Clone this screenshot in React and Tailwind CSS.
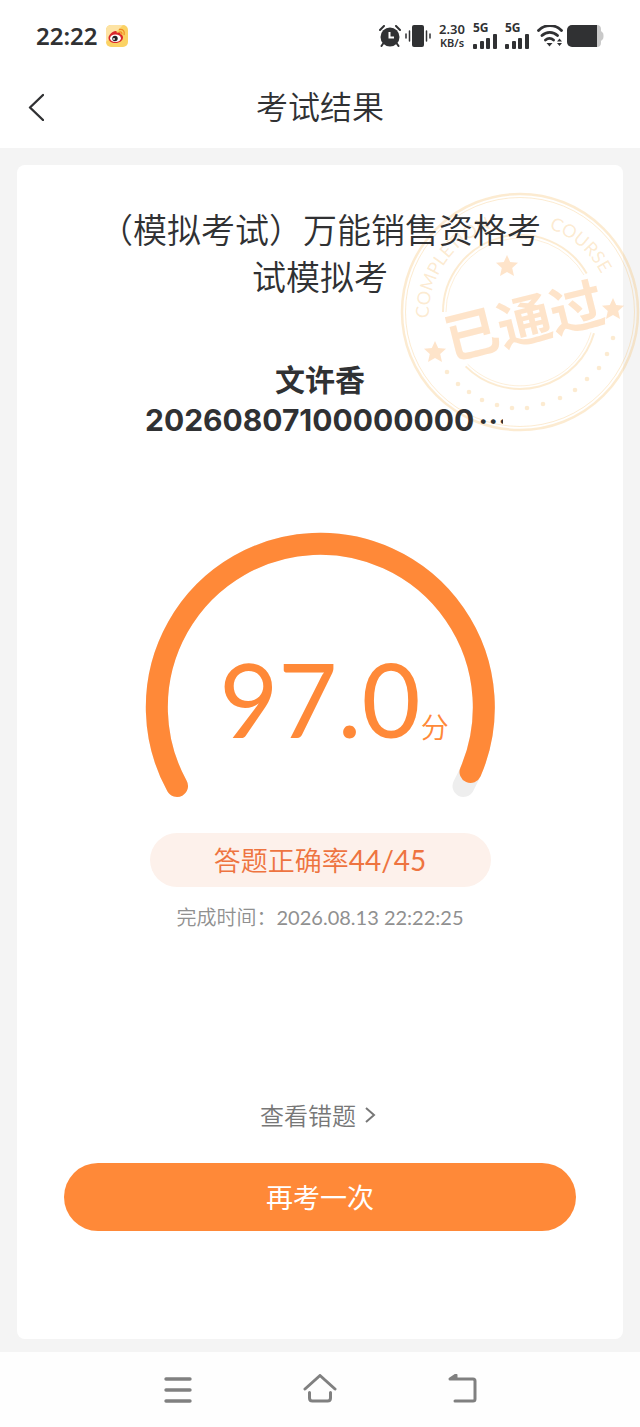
import React from 'react';

const result = {
  title: '（模拟考试）万能销售资格考试模拟考',
  name: '文许香',
  number: '20260807100000000',
  score: '97.0',
  correct: 44,
  total: 45,
  finishedAt: '2026.08.13 22:22:25',
};

const STAR = 'M0-11 3.2-4 11-3.2 5.2 2 7 10 0 6-7 10-5.2 2-11-3.2-3.2-4Z';

// small marks along the lower edge of the stamp
const stampDots = [
  [47, 180], [58, 192], [69, 200], [82, 208], [97, 213], [112, 216], [127, 216],
  [143, 212], [160, 206], [175, 198], [187, 187], [199, 176], [207, 162], [213, 146],
];

const Signal = () => (
  <div className="flex flex-col items-start">
    <span className="text-[12px] leading-[10px] font-bold">5G</span>
    <svg className="h-4 w-6" viewBox="0 0 24 16" fill="currentColor" aria-hidden="true">
      <rect x="0" y="11" width="4" height="5" rx="1" />
      <rect x="7" y="8" width="4" height="8" rx="1" />
      <rect x="13" y="5" width="4" height="11" rx="1" />
      <rect x="20" y="1" width="4" height="15" rx="1" />
    </svg>
  </div>
);

const StatusBar = () => (
  <div className="flex h-[72px] items-center justify-between pr-9 pl-9">
    <div className="flex items-center gap-2">
      <span className="font-['Noto_Sans','Noto_Sans_CJK_SC',sans-serif] text-[24px] leading-8 font-semibold">22:22</span>
      <svg className="size-[22px]" viewBox="0 0 22 22" aria-hidden="true">
        <rect width="22" height="22" rx="5" fill="#fbd264" />
        <path d="M0 5a5 5 0 0 1 5-5h12L0 17Z" fill="#fde3a4" />
        <path d="M2.5 13c0-3 4-7 7-7 1.500 0 1.500 1 1.200 2 2-.8 4-.7 3.800 1.300 1.800.4 2.500 1.800 2.500 3.200 0 3-3.500 5.500-7.500 5.500s-7-2-7-5Z" fill="#d9282b" />
        <ellipse cx="9.500" cy="13.300" rx="5.400" ry="3.800" fill="#fff" />
        <circle cx="9" cy="13.500" r="2.700" fill="#222" />
        <circle cx="8" cy="14" r="0.900" fill="#fff" />
        <path d="M13.500 4.500c3.500-.6 5.500 1.800 4.600 5M13.800 7c1.600-.2 2.400.7 2 2.200" fill="none" stroke="#f08c25" strokeWidth="1.300" strokeLinecap="round" />
      </svg>
    </div>

    <div className="flex items-center gap-2 font-['Noto_Sans',sans-serif]">
      <svg className="h-[22px] w-[22px]" viewBox="0 0 22 22" aria-hidden="true">
        <circle cx="11" cy="12" r="9.500" fill="currentColor" />
        <path d="M1 5 5 1M21 5l-4-4M4.500 18 2.500 21M17.500 18l2 3" stroke="currentColor" strokeWidth="2" strokeLinecap="round" />
        <path d="M10.500 7v5.500H15" fill="none" stroke="#fff" strokeWidth="2" />
      </svg>
      <svg className="-ml-1 h-[22px] w-[26px]" viewBox="0 0 26 22" aria-hidden="true">
        <rect x="7" y="0" width="12" height="22" rx="2" fill="currentColor" />
        <path d="M4.500 6v10M1 9v4M21.500 6v10M25 9v4" stroke="currentColor" strokeWidth="1.500" strokeLinecap="round" />
      </svg>
      <div className="flex flex-col items-center text-[13px] leading-[13px] font-semibold">
        <span>2.30</span>
        <span className="text-[11px]">KB/s</span>
      </div>
      <Signal />
      <Signal />
      <svg className="h-[22px] w-[26px]" viewBox="0 0 26 22" fill="none" aria-hidden="true">
        <path d="M1.500 5.500a16 16 0 0 1 23 0M5 10.500a11 11 0 0 1 15.500 0M8.500 15a6 6 0 0 1 8 0" stroke="currentColor" strokeWidth="2.800" strokeLinecap="round" />
        <path d="m9.500 18 3 3.500 3-3.500ZM20 16.500l2.500-3 2.500 3ZM20 18l2.500 3 2.500-3Z" fill="currentColor" />
      </svg>
      <svg className="-ml-1 h-[22px] w-[37px]" viewBox="0 0 37 22" aria-hidden="true">
        <path d="M26 0h4c2.500 0 4 1.500 4 4v2l2 2c.7.800.7 5.200 0 6l-2 2v2c0 2.500-1.500 4-4 4h-4Z" fill="#c9c9c9" />
        <path d="M5 0h25v22H5a5 5 0 0 1-5-5V5a5 5 0 0 1 5-5Z" fill="currentColor" />
      </svg>
    </div>
  </div>
);

const Header = () => (
  <header className="grid h-[76px] grid-cols-[80px_1fr_80px] items-center pb-1.5">
    <button type="button" aria-label="返回" className="flex h-full items-center pl-7">
      <svg className="h-7 w-4" viewBox="0 0 16 28" fill="none" stroke="currentColor" strokeWidth="2.400" strokeLinecap="round" strokeLinejoin="round">
        <path d="M15 2 2 14.500 15 27" />
      </svg>
    </button>
    <h1 className="pb-1 text-center text-[32px] leading-10">考试结果</h1>
  </header>
);

const Stamp = () => (
  <svg
    className="absolute top-[27px] -right-[17px] size-[240px]"
    viewBox="0 0 240 240"
    fill="none"
    role="img"
    aria-label="已通过"
  >
    <g stroke="#f5b04c" strokeOpacity="0.26">
      <circle cx="120" cy="120" r="118" strokeWidth="2.500" />
      <circle cx="120" cy="120" r="114.500" strokeWidth="1" />
      <path d="M43 120A77 77 0 0 1 186.700 81.500M194 141.200A77 77 0 0 1 65.600 174.400" strokeWidth="2" />
      <path d="M46 120A74 74 0 0 1 184 83M191 140.400A74 74 0 0 1 67.700 172.300" strokeWidth="0.800" />
    </g>
    <path id="stamp-arc" d="M29 126A91 91 0 0 1 211 120" />
    <g fill="#f5b04c" fillOpacity="0.26" className="font-['Lato',sans-serif] text-[18px] font-normal">
      <text>
        <textPath href="#stamp-arc" startOffset="0">COMPLETION</textPath>
      </text>
      <text textAnchor="end">
        <textPath href="#stamp-arc" startOffset="246">COURSE</textPath>
      </text>
      {stampDots.map(([x, y]) => (
        <circle key={x} cx={x} cy={y} r="2.300" />
      ))}
    </g>
    <g fill="#fa9a3c" fillOpacity="0.27">
      <path d={STAR} transform="translate(107 74)" />
      <path d={STAR} transform="translate(35 160)" />
      <path d={STAR} transform="translate(213 117)" />
      <text
        x="124"
        y="149"
        textAnchor="middle"
        transform="rotate(-14 124 128)"
        className="font-['Noto_Sans_CJK_SC',sans-serif] text-[54px] font-bold"
      >
        已通过
      </text>
    </g>
  </svg>
);

const ScoreGauge = ({ score }) => (
  <div className="mt-[90px] grid justify-items-center text-[#ff8938]">
    <svg className="col-start-1 row-start-1 h-[266px] w-[350px]" viewBox="0 0 350 266" fill="none" strokeWidth="22" strokeLinecap="round" aria-hidden="true">
      <path d="M32 254A163.500 163.500 0 1 1 318.500 254" stroke="#eeeeee" />
      <path d="M32 254A163.500 163.500 0 1 1 325.500 240" stroke="currentColor" />
    </svg>
    <p className="col-start-1 row-start-1 flex items-baseline self-end pb-12 pl-7">
      <span className="font-['Lato',sans-serif] text-[102px] leading-[102px] font-normal">{score}</span>
      <span className="text-[28px] leading-10">分</span>
    </p>
  </div>
);

const NavBar = () => (
  <nav className="grid h-[75px] grid-cols-[1fr_72px_70px_72px_70px_72px_1fr] items-center bg-[#fefefe] text-[#808080]">
    <button type="button" aria-label="最近任务" className="col-start-2 flex justify-center">
      <svg className="h-8 w-9" viewBox="0 0 36 32" fill="none" stroke="currentColor" strokeWidth="3.400" strokeLinecap="round">
        <path d="M6 5h24M6 16h24M6 27h24" />
      </svg>
    </button>
    <button type="button" aria-label="主屏幕" className="col-start-4 flex justify-center">
      <svg className="h-8 w-9" viewBox="0 0 36 32" fill="none" stroke="currentColor" strokeWidth="3" strokeLinecap="round" strokeLinejoin="round">
        <path d="M3 15 18 1.500 33 15M7.500 18.500V24q0 3 3 3h15q3 0 3-3v-5.500" />
      </svg>
    </button>
    <button type="button" aria-label="返回上一页" className="col-start-6 flex justify-center">
      <svg className="h-8 w-9" viewBox="0 0 36 32" fill="none" stroke="currentColor" strokeWidth="3" strokeLinecap="round" strokeLinejoin="round">
        <path d="M11 27H29q2 0 2-2V7q0-2-2-2H6l6-4v4" />
      </svg>
    </button>
  </nav>
);

const App = () => {
  return (
    <div className="flex min-h-screen flex-col overflow-x-hidden bg-[#f4f4f4] font-['Noto_Sans_CJK_SC',sans-serif] font-[350] text-[#303133]">
      <div className="bg-white">
        <StatusBar />
        <Header />
      </div>

      <main className="flex grow flex-col px-[17px] pt-[17px] pb-[13px]">
        <section className="relative flex grow flex-col items-center rounded-lg bg-white pt-10">
          <Stamp />
          <h2 className="relative px-[76px] text-center text-[34px] leading-[47px]">{result.title}</h2>

          <p className="relative mt-[59px] text-[30px] leading-[41px] font-bold">{result.name}</p>
          <p className="relative ml-2 flex w-[358px] gap-1 overflow-hidden text-[30px] leading-[43px] font-bold whitespace-nowrap">
            <span className="font-['Inter',sans-serif]">{result.number}</span>
            <span>⋯</span>
          </p>

          <ScoreGauge score={result.score} />

          <p className="mt-[35px] flex h-[54px] w-[341px] items-center justify-center rounded-full bg-[#fdf1eb] text-[27px] text-[#ee7440]">
            答题正确率
            <span className="font-['Lato',sans-serif] text-[28px] font-normal">
              {result.correct}/{result.total}
            </span>
          </p>
          <p className="mt-4 text-[20px] leading-7 text-[#909090]">
            完成时间：
            <span className="font-['Lato',sans-serif] font-normal">{result.finishedAt}</span>
          </p>

          <a href="#wrong" className="mt-auto flex items-center gap-2 pr-1 text-[24px] leading-9 text-[#777777]">
            查看错题
            <svg className="h-[18px] w-3" viewBox="0 0 12 18" fill="none" stroke="currentColor" strokeWidth="2" aria-hidden="true">
              <path d="m2 2 8 7-8 7" />
            </svg>
          </a>
          <div className="mt-[30px] w-full px-[47px] pb-[108px]">
            <button type="button" className="h-[68px] w-full rounded-full bg-[#ff8938] text-[27px] font-normal text-white">
              再考一次
            </button>
          </div>
        </section>
      </main>

      <NavBar />
    </div>
  );
};

export default App;
